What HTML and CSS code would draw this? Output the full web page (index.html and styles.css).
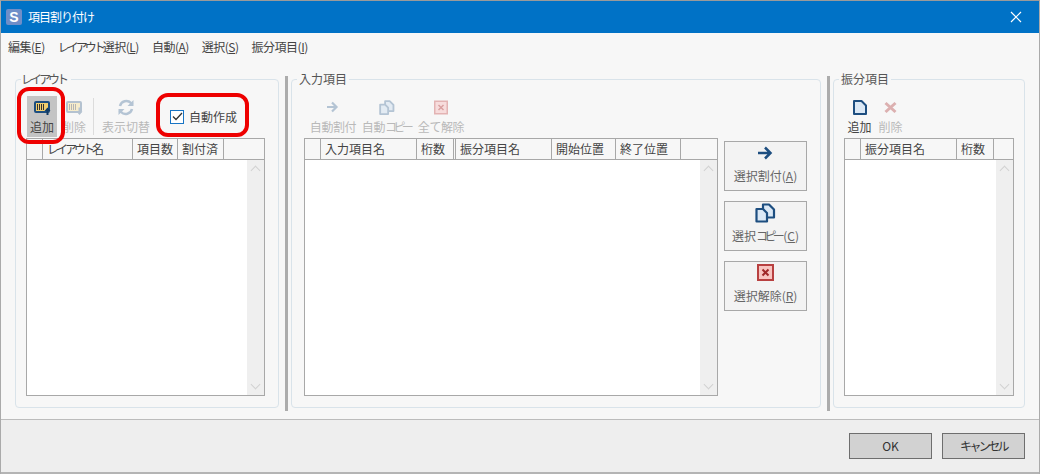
FILE: index.html
```html
<!DOCTYPE html>
<html lang="ja">
<head>
<meta charset="utf-8">
<title>項目割り付け</title>
<link rel="stylesheet" href="styles.css">
</head>
<body>
<div class="window">
  <header class="titlebar">
    <span class="app-icon">S</span>
    <span class="title">項目割り付け</span>
    <svg class="close" width="12" height="12" viewBox="0 0 12 12"><path d="M1 1l10 10M11 1L1 11" stroke="#fff" stroke-width="1.2" fill="none"/></svg>
  </header>
  <nav class="menubar">
    <span>編集(<u>E</u>)</span>
    <span><span class="kana">レイアウト</span>選択(<u>L</u>)</span>
    <span>自動(<u>A</u>)</span>
    <span>選択(<u>S</u>)</span>
    <span>振分項目(<u>I</u>)</span>
  </nav>
  <main class="content">
    <section class="panel panel-layout">
      <span class="legend"><span class="kana">レイアウト</span></span>
      <div class="toolbar">
        <div class="tool tool-active">
          <svg width="20" height="20" viewBox="0 0 20 20"><rect x="3" y="4" width="14" height="10" rx="1" fill="#f2cf6e" stroke="#1d4e80" stroke-width="2"/><path d="M5.500 6v6M7.500 6v6M9.500 6v6M11.500 6v6" stroke="#333" stroke-width="1"/><path d="M15.500 17v-5" stroke="#123a63" stroke-width="2"/><path d="M12.500 13l3-3.500 3 3.500z" fill="#123a63"/></svg>
          <span class="tool-label">追加</span>
        </div>
        <div class="tool tool-narrow disabled">
          <svg width="20" height="20" viewBox="0 0 20 20"><rect x="3" y="4" width="14" height="10" rx="1" fill="#f6eccb" stroke="#b4c2d0" stroke-width="2"/><path d="M5.500 6v6M7.500 6v6M9.500 6v6M11.500 6v6" stroke="#b5b5b5" stroke-width="1"/><path d="M15.500 9.500v5" stroke="#b4c2d0" stroke-width="2"/><path d="M12.500 13.500l3 3.500 3-3.500z" fill="#b4c2d0"/></svg>
          <span class="tool-label">削除</span>
        </div>
        <div class="tool-sep"></div>
        <div class="tool tool-wide disabled">
          <svg width="20" height="20" viewBox="0 0 20 20"><g transform="translate(1 0)"><path d="M3 8a6.500 6.500 0 0 1 11-3l1.500 1.500M15 11a6.500 6.500 0 0 1-11 3l-1.500-1.500" stroke="#b4c4d4" stroke-width="2.500" fill="none"/><path d="M16.500 2v6h-6zM1.500 17v-6h6z" fill="#b4c4d4"/></g></svg>
          <span class="tool-label">表示切替</span>
        </div>
        <label class="auto-check">
          <span class="checkbox"><svg width="11" height="9" viewBox="0 0 11 9"><path d="M1 4.500l3 3L10 1" stroke="#333" stroke-width="1.300" fill="none"/></svg></span>
          <span>自動作成</span>
        </label>
      </div>
      <div class="grid grid-layout">
        <div class="grid-head">
          <span class="col col-mark"></span>
          <span class="col col-name-l"><span class="kana">レイアウト</span>名</span>
          <span class="col col-count">項目数</span>
          <span class="col col-done">割付済</span>
        </div>
        <div class="grid-body"><div class="scrollbar"><i class="chev-up"></i><i class="chev-down"></i></div></div>
      </div>
      <div class="mark mark-add"></div>
      <div class="mark mark-auto"></div>
    </section>
    <div class="splitter"></div>
    <section class="panel panel-input">
      <span class="legend">入力項目</span>
      <div class="toolbar">
        <div class="tool tool-mid disabled">
          <svg width="20" height="20" viewBox="0 0 20 20"><path d="M4 9h9M9 4.500L13.500 9 9 13.500" stroke="#b4c4d4" stroke-width="2.200" fill="none"/></svg>
          <span class="tool-label">自動割付</span>
        </div>
        <div class="tool tool-mid disabled">
          <svg width="20" height="20" viewBox="-2.650 -2.650 26.300 26.300"><path d="M8 1.500h6l5 5v8H8z" fill="#e3ebf3" stroke="#b4c4d4" stroke-width="2.400" stroke-linejoin="round"/><path d="M1.500 6H8l4 4v8.500H1.500z" fill="#e3ebf3" stroke="#b4c4d4" stroke-width="2.400" stroke-linejoin="round"/></svg>
          <span class="tool-label">自動<span class="kana-tight">コピー</span></span>
        </div>
        <div class="tool tool-mid disabled">
          <svg width="20" height="20" viewBox="0 0 20 20"><rect x="3.750" y="3.250" width="12.500" height="12.500" fill="#f7dcdc" stroke="#e3b3b3" stroke-width="1.500"/><path d="M7.500 7l5 5M12.500 7l-5 5" stroke="#d9a0a0" stroke-width="1.500"/></svg>
          <span class="tool-label">全て解除</span>
        </div>
      </div>
      <div class="input-row">
        <div class="grid grid-input">
          <div class="grid-head">
            <span class="col col-mark"></span>
            <span class="col col-name-i">入力項目名</span>
            <span class="col col-digits-d">桁数</span>
            <span class="col col-alloc">振分項目名</span>
            <span class="col col-start">開始位置</span>
            <span class="col col-end">終了位置</span>
          </div>
          <div class="grid-body"><div class="scrollbar"><i class="chev-up"></i><i class="chev-down"></i></div></div>
        </div>
        <div class="side-buttons">
          <div class="side-btn">
            <svg width="21" height="21" viewBox="0 0 21 21"><path d="M3 10h12M10 4.500L15.500 10 10 15.500" stroke="#1d4e80" stroke-width="2.500" fill="none"/></svg>
            <span>選択割付(<u>A</u>)</span>
          </div>
          <div class="side-btn">
            <svg width="21" height="21" viewBox="0 0 21 21"><path d="M8 1.500h6l5 5v8H8z" fill="#dbe8f5" stroke="#1d4e80" stroke-width="2.200" stroke-linejoin="round"/><path d="M1.500 6H8l4 4v8.500H1.500z" fill="#dbe8f5" stroke="#1d4e80" stroke-width="2.200" stroke-linejoin="round"/></svg>
            <span>選択<span class="kana-tight">コピー</span>(<u>C</u>)</span>
          </div>
          <div class="side-btn">
            <svg width="21" height="21" viewBox="0 0 21 21"><rect x="3" y="2" width="15" height="15" fill="#f8c4c0" stroke="#b84040" stroke-width="2"/><path d="M7.500 6.500l6 6M13.500 6.500l-6 6" stroke="#a02828" stroke-width="2"/></svg>
            <span>選択解除(<u>R</u>)</span>
          </div>
        </div>
      </div>
    </section>
    <div class="splitter"></div>
    <section class="panel panel-alloc">
      <span class="legend">振分項目</span>
      <div class="toolbar">
        <div class="tool tool-small">
          <svg width="20" height="20" viewBox="0 0 20 20"><path d="M4 3h7.500L16 7.500V16H4z" fill="#dbe8f5" stroke="#1d4e80" stroke-width="2" stroke-linejoin="round"/></svg>
          <span class="tool-label">追加</span>
        </div>
        <div class="tool tool-small disabled">
          <svg width="20" height="20" viewBox="0 0 20 20"><path d="M4.500 5l10 9M14.500 5l-10 9" stroke="#dcb0b0" stroke-width="3"/></svg>
          <span class="tool-label">削除</span>
        </div>
      </div>
      <div class="grid grid-alloc">
        <div class="grid-head">
          <span class="col col-mark"></span>
          <span class="col col-name-a">振分項目名</span>
          <span class="col col-digits">桁数</span>
        </div>
        <div class="grid-body"><div class="scrollbar"><i class="chev-up"></i><i class="chev-down"></i></div></div>
      </div>
    </section>
  </main>
  <footer class="footer">
    <button class="btn" type="button">OK</button>
    <button class="btn btn-kana" type="button">キャンセル</button>
  </footer>
</div>
</body>
</html>
```
FILE: styles.css
```css
* { box-sizing: border-box; }
html, body { margin: 0; padding: 0; }
body {
  width: 1040px;
  height: 474px;
  overflow: hidden;
  font-family: "Noto Sans CJK JP", "Noto Sans", sans-serif;
  font-size: 12px;
  color: #444;
}
u { text-decoration: underline; }
.window {
  width: 1040px;
  height: 474px;
  display: flex;
  flex-direction: column;
  background: #f7f7f7;
  border-left: 1px solid #aaa;
  border-right: 1px solid #aaa;
  border-top: 1px solid #9a9a9a;
}
.titlebar {
  height: 32px;
  flex: none;
  background: #0072c6;
  color: #fff;
  display: flex;
  align-items: center;
  padding: 0 17px 0 5px;
  font-size: 12px;
}
.app-icon {
  width: 16px;
  height: 16px;
  border-radius: 2px;
  background: #6f8ec8;
  color: #fff;
  font: bold 14px/16px "Liberation Sans", sans-serif;
  text-align: center;
  margin-right: 6px;
}
.title { flex: 1; line-height: 18px; letter-spacing: -1px; }
.menubar {
  height: 27px;
  flex: none;
  display: flex;
  align-items: center;
  gap: 13px;
  padding: 0 0 0 7px;
  color: #444;
  line-height: 16px;
}
.menubar > span { letter-spacing: -0.5px; }
.kana, .menubar .kana { letter-spacing: -3px; }
.kana-tight { letter-spacing: -3.6px; margin-right: 2px; }
.content {
  flex: none;
  height: 359px;
  display: flex;
  align-items: stretch;
  padding: 16px 14px 8px 14px;
}
.panel {
  position: relative;
  border: 1px solid #d9e3ea;
  border-radius: 4px;
  margin-top: 3px;
  margin-bottom: 3px;
  display: flex;
  flex-direction: column;
  padding: 6px 0 0 10px;
}
.panel-layout { width: 264px; }
.panel-input { width: 530px; padding-left: 12px; }
.panel-alloc { width: 192px; }
.legend {
  position: absolute;
  left: 5px;
  top: -9px;
  padding: 0 2px;
  background: #f7f7f7;
  color: #555;
  line-height: 16px;
}
.legend .kana { margin-left: -2px; padding-right: 3px; }
.splitter {
  width: 3px;
  flex: none;
  margin: 0 3px 0 6px;
  background: #acacac;
}
.toolbar {
  height: 52px;
  flex: none;
  display: flex;
  align-items: flex-start;
}
.tool {
  width: 33px;
  height: 41px;
  margin-top: 10px;
  padding-top: 2px;
  display: flex;
  flex-direction: column;
  align-items: center;
  gap: 1px;
  flex: none;
  color: #444;
}
.tool-active { background: #c4c4c4; width: 30px; margin-left: 1px; }
.tool-narrow { width: 34px; }
.tool-wide { width: 58px; }
.tool-mid { width: 54px; letter-spacing: -0.4px; }
.tool-small { width: 31px; }
.panel-input .toolbar { margin-left: 2px; }
.tool svg { flex: none; }
.tool-label { line-height: 16px; white-space: nowrap; }
.disabled { color: #b9b9b9; }
.tool-sep {
  width: 1px;
  height: 37px;
  margin: 12px 3px 0 2px;
  background: #dcdcdc;
  flex: none;
}
.auto-check {
  display: flex;
  align-items: center;
  gap: 5px;
  margin: 10px 0 0 15px;
  height: 41px;
  color: #444;
}
.checkbox {
  width: 14px;
  height: 14px;
  border: 1px solid #1874c4;
  background: #fff;
  display: flex;
  align-items: center;
  justify-content: center;
}
.grid {
  height: 258px;
  border: 1px solid #a8a8a8;
  display: flex;
  flex-direction: column;
  flex: none;
  background: #f7f7f7;
}
.grid-layout { width: 239px; }
.grid-input { width: 414px; }
.grid-alloc { width: 170px; }
.grid-head {
  height: 21px;
  flex: none;
  display: flex;
  border-bottom: 1px solid #a8a8a8;
}
.col {
  border-right: 1px solid #a8a8a8;
  line-height: 20px;
  padding-left: 4px;
  white-space: nowrap;
  color: #444;
  overflow: hidden;
  flex: none;
}
.col-mark { width: 16px; padding: 0; }
.col-name-l { width: 90px; }
.col-count { width: 45px; }
.col-done { width: 46px; }
.col-name-i { width: 96px; }
.col-digits { width: 37px; }
.col-digits-d { width: 39px; border-right: 3px double #a8a8a8; }
.col-alloc { width: 96px; }
.col-start { width: 64px; }
.col-end { width: 65px; }
.col-name-a { width: 96px; }
.grid-body {
  flex: 1;
  background: #fff;
  display: flex;
  justify-content: flex-end;
}
.scrollbar {
  width: 17px;
  background: #efefef;
  display: flex;
  flex-direction: column;
  justify-content: space-between;
  align-items: center;
  padding: 7px 0;
}
.scrollbar i {
  display: block;
  width: 7px;
  height: 7px;
  border-left: 1px solid #d2d2d2;
  border-top: 1px solid #d2d2d2;
}
.chev-up { transform: rotate(45deg); }
.chev-down { transform: rotate(225deg); }
.input-row {
  display: flex;
  gap: 6px;
  flex: none;
}
.side-buttons {
  display: flex;
  flex-direction: column;
  gap: 10px;
  padding-top: 3px;
}
.side-btn {
  width: 83px;
  height: 50px;
  border: 1px solid #a8a8a8;
  background: #f3f3f3;
  display: flex;
  flex-direction: column;
  align-items: center;
  color: #666;
  padding-top: 1px;
  gap: 4px;
}
.side-btn svg { flex: none; }
.side-btn span { line-height: 16px; white-space: nowrap; }
.footer {
  flex: 1;
  background: #eee;
  border-top: 1px solid #bcbcbc;
  border-bottom: 2px solid #b4b4b4;
  display: flex;
  justify-content: flex-end;
  align-items: flex-start;
  gap: 10px;
  padding: 13px 14px 0 0;
}
.btn {
  width: 83px;
  height: 26px;
  border: 1px solid #6e6e6e;
  background: #d2d2d2;
  font: 12px/16px "Noto Sans CJK JP", sans-serif;
  color: #333;
  padding: 0;
}
.btn-kana { letter-spacing: -2.6px; }
.mark {
  position: absolute;
  border: 4px solid #ee0000;
  border-radius: 12px;
  pointer-events: none;
}
.mark-add { left: 1px; top: 7px; width: 48px; height: 57px; }
.mark-auto { left: 140px; top: 13px; width: 93px; height: 44px; }
```
